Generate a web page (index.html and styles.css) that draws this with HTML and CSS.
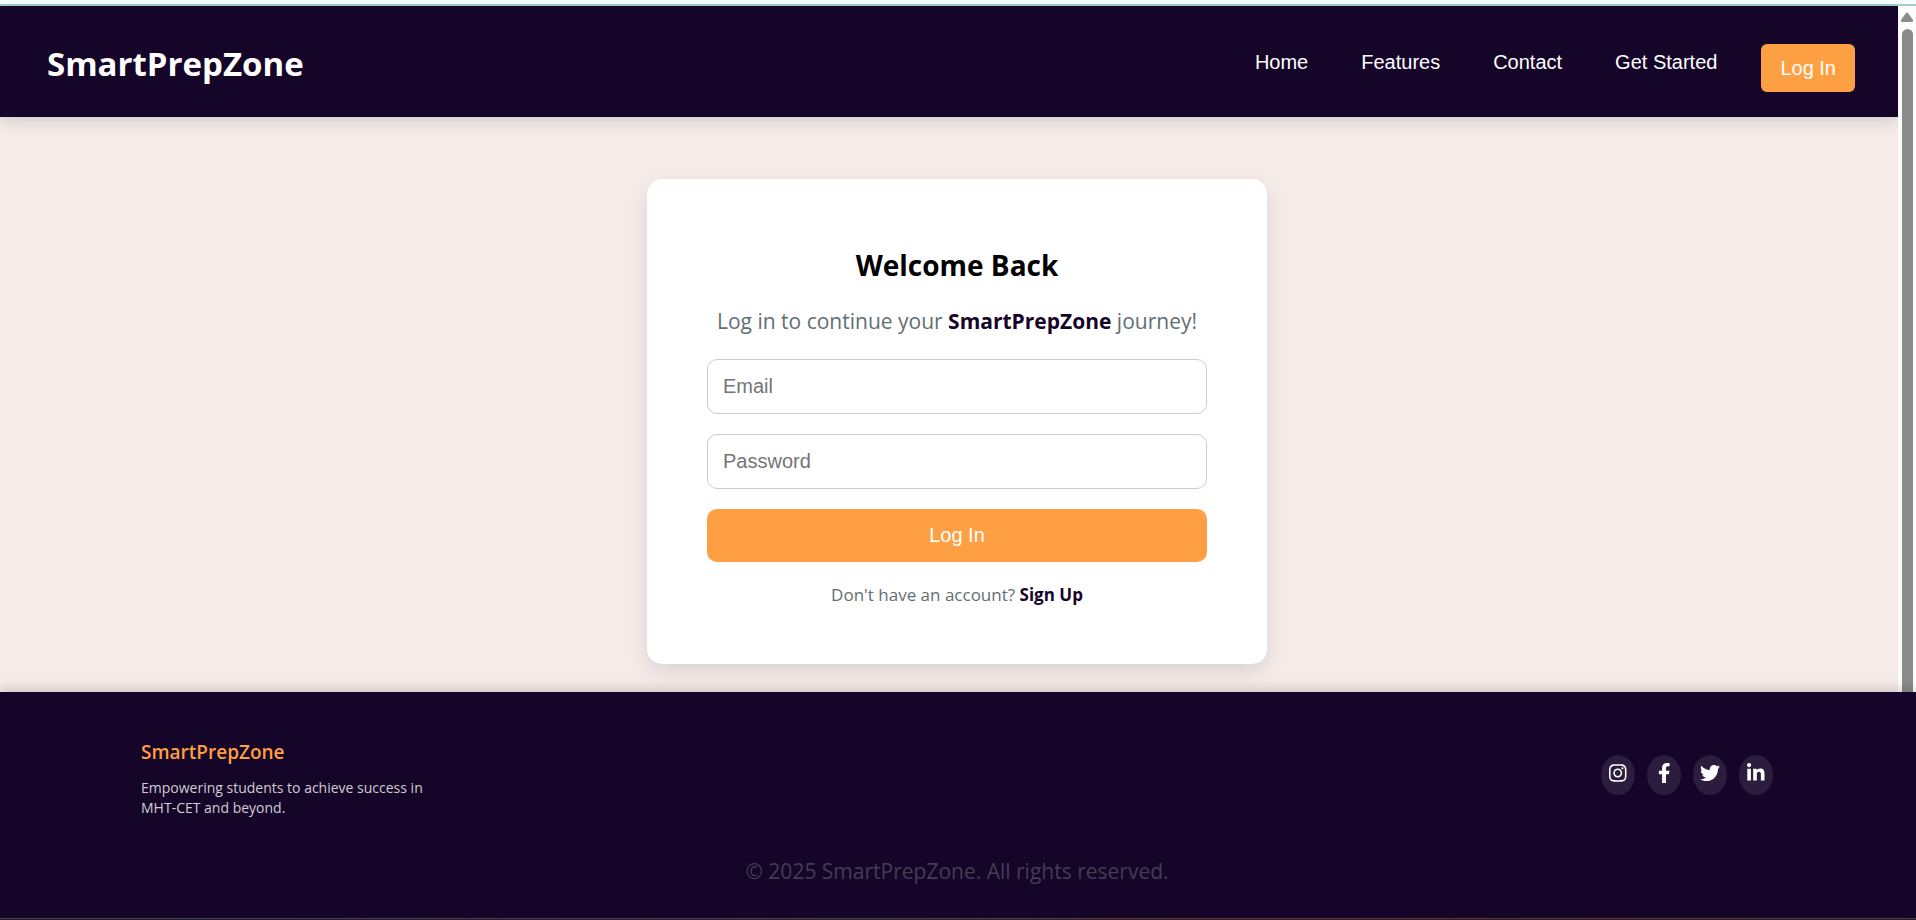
FILE: index.html
```html
<!DOCTYPE html>
<html lang="en">
<head>
<meta charset="utf-8">
<title>SmartPrepZone - Log In</title>
<link rel="stylesheet" href="styles.css">
</head>
<body>
<div class="window-edge"></div>
<div class="viewport">
  <div class="page">
    <header class="navbar">
      <div class="logo">SmartPrepZone</div>
      <nav class="nav">
        <a class="nav-link" href="#home">Home</a>
        <a class="nav-link" href="#features">Features</a>
        <a class="nav-link" href="#contact">Contact</a>
        <a class="nav-link" href="#start">Get Started</a>
        <button class="nav-button" type="button">Log In</button>
      </nav>
    </header>
    <main class="content">
      <form class="card">
        <h1 class="card-title">Welcome Back</h1>
        <p class="card-text">Log in to continue your <strong class="brand">SmartPrepZone</strong> journey!</p>
        <input class="field" type="email" placeholder="Email" aria-label="Email">
        <input class="field" type="password" placeholder="Password" aria-label="Password">
        <button class="submit" type="submit">Log In</button>
        <p class="signup">Don't have an account? <a class="signup-link" href="#signup">Sign Up</a></p>
      </form>
    </main>
  </div>
  <div class="scrollbar">
    <svg class="scroll-arrow" viewBox="0 0 14 10" width="14" height="10"><path d="M6 1Q7 0 8 1L13 8Q13.500 10 12 10H2Q.5 10 1 8Z" fill="#8b8b8b"/></svg>
    <div class="scroll-thumb"></div>
  </div>
</div>
<footer class="footer">
  <div class="footer-main">
    <div class="footer-about">
      <h2 class="footer-brand">SmartPrepZone</h2>
      <p class="footer-text">Empowering students to achieve success in MHT-CET and beyond.</p>
    </div>
    <div class="socials">
      <a class="social" href="#instagram" aria-label="Instagram"><svg viewBox="0 0 448 512" height="20"><path d="M224.100 141c-63.600 0-114.900 51.300-114.900 114.900s51.300 114.900 114.900 114.900S339 319.500 339 255.900 287.700 141 224.100 141zm0 189.600c-41.100 0-74.700-33.500-74.700-74.700s33.500-74.700 74.700-74.700 74.700 33.500 74.700 74.700-33.600 74.700-74.700 74.700zm146.400-194.300c0 14.900-12 26.800-26.800 26.800-14.900 0-26.800-12-26.800-26.800s12-26.800 26.800-26.800 26.800 12 26.800 26.800zm76.100 27.200c-1.700-35.900-9.900-67.700-36.200-93.900-26.200-26.200-58-34.400-93.900-36.200-37-2.100-147.900-2.100-184.900 0-35.800 1.700-67.600 9.900-93.900 36.100s-34.400 58-36.200 93.900c-2.100 37-2.100 147.900 0 184.900 1.700 35.900 9.900 67.700 36.200 93.900s58 34.400 93.900 36.200c37 2.100 147.900 2.100 184.900 0 35.900-1.700 67.700-9.900 93.900-36.200 26.200-26.200 34.400-58 36.200-93.900 2.100-37 2.100-147.800 0-184.800zM398.800 388c-7.800 19.600-22.900 34.700-42.600 42.600-29.500 11.700-99.500 9-132.100 9s-102.700 2.600-132.100-9c-19.600-7.800-34.700-22.900-42.600-42.600-11.700-29.500-9-99.500-9-132.100s-2.600-102.700 9-132.100c7.800-19.600 22.900-34.700 42.600-42.600 29.500-11.700 99.500-9 132.100-9s102.700-2.600 132.100 9c19.600 7.800 34.700 22.900 42.600 42.600 11.700 29.500 9 99.500 9 132.100s2.700 102.700-9 132.100z"/></svg></a>
      <a class="social" href="#facebook" aria-label="Facebook"><svg viewBox="0 0 320 512" height="20"><path d="M279.140 288l14.220-92.660h-88.910v-60.130c0-25.350 12.420-50.060 52.240-50.060h40.420V6.260S260.430 0 225.360 0c-73.220 0-121.080 44.380-121.080 124.720v70.620H22.890V288h81.390v224h100.170V288z"/></svg></a>
      <a class="social" href="#twitter" aria-label="Twitter"><svg viewBox="0 0 512 512" height="20"><path d="M459.370 151.716c.325 4.548.325 9.097.325 13.645 0 138.720-105.583 298.558-298.558 298.558-59.452 0-114.680-17.219-161.137-47.106 8.447.974 16.568 1.299 25.340 1.299 49.055 0 94.213-16.568 130.274-44.832-46.132-.975-84.792-31.188-98.112-72.772 6.498.974 12.995 1.624 19.818 1.624 9.421 0 18.843-1.300 27.614-3.573-48.081-9.747-84.143-51.980-84.143-102.985v-1.299c13.969 7.797 30.214 12.670 47.431 13.319-28.264-18.843-46.781-51.005-46.781-87.391 0-19.492 5.197-37.360 14.294-52.954 51.655 63.675 129.300 105.258 216.365 109.807-1.624-7.797-2.599-15.918-2.599-24.040 0-57.828 46.782-104.934 104.934-104.934 30.213 0 57.502 12.670 76.670 33.137 23.715-4.548 46.456-13.320 66.599-25.340-7.798 24.366-24.366 44.833-46.132 57.827 21.117-2.273 41.584-8.122 60.426-16.243-14.292 20.791-32.161 39.308-52.628 54.253z"/></svg></a>
      <a class="social" href="#linkedin" aria-label="LinkedIn"><svg viewBox="0 0 448 512" height="20"><path d="M100.280 448H7.400V148.900h92.880zM53.790 108.100C24.090 108.100 0 83.500 0 53.800a53.790 53.790 0 0 1 107.580 0c0 29.700-24.100 54.300-53.790 54.300zM447.900 448h-92.680V302.400c0-34.700-.7-79.200-48.290-79.200-48.290 0-55.690 37.700-55.690 76.700V448h-92.780V148.900h89.080v40.800h1.300c12.400-23.500 42.690-48.300 87.880-48.300 94 0 111.280 61.900 111.280 142.300V448z"/></svg></a>
    </div>
  </div>
  <p class="copyright">© 2025 SmartPrepZone. All rights reserved.</p>
</footer>
<div class="bottom-edge"></div>
</body>
</html>
```
FILE: styles.css
```css
* { box-sizing: border-box; margin: 0; }
body {
  min-height: 100vh;
  display: flex;
  flex-direction: column;
  overflow: hidden;
  background: #f5ecea;
  font-family: "Open Sans", "Noto Sans", sans-serif;
}
.window-edge { height: 6px; background: #f5ffff; border-bottom: 2px solid #a6cfd1; }
.viewport { display: flex; flex: 1; }
.page { flex: 1; display: flex; flex-direction: column; }
.navbar {
  display: flex;
  justify-content: space-between;
  align-items: flex-start;
  padding: 33px 43px 25px 47px;
  background: #150528;
  box-shadow: 0 4px 15px rgba(0, 0, 0, 0.15);
}
.logo { color: #fff; font-size: 33px; font-weight: 700; line-height: 49px; }
.nav { display: flex; align-items: center; padding-top: 5px; }
.nav-link, .nav-button, .field, .submit {
  font-family: "Liberation Sans", Arial, sans-serif;
  font-size: 20px;
}
.nav-link { margin-right: 53px; padding-bottom: 12px; color: #fff; text-decoration: none; }
.nav-link:nth-child(4) { margin-right: 44px; }
.nav-button {
  height: 48px;
  padding: 0 19px;
  border: 0;
  border-radius: 6px;
  background: #ff9f43;
  color: #fff;
}
.content { display: flex; justify-content: center; padding: 62px 0 28px 16px; }
.card {
  width: 620px;
  padding: 60px 60px 58px;
  border-radius: 15px;
  background: #fff;
  box-shadow: 0 8px 20px rgba(0, 0, 0, 0.1);
  display: flex;
  flex-direction: column;
  text-align: center;
}
.card-title { font-size: 28px; line-height: 52px; color: #000; }
.card-text { margin: 12px 0 20px; font-size: 21px; line-height: 36px; color: #636e72; }
.brand { color: #150528; }
.field {
  height: 55px;
  margin-bottom: 20px;
  padding: 0 15px;
  border: 1px solid #ccc;
  border-radius: 10px;
  background: #fff;
}
.field::placeholder { color: #757575; }
.submit { height: 53px; border: 0; border-radius: 10px; background: #ff9f43; color: #fff; }
.signup { margin-top: 22px; font-size: 17px; line-height: 22px; color: #636e72; }
.signup-link { color: #150528; font-weight: 700; text-decoration: none; }
.scrollbar {
  width: 18px;
  display: flex;
  flex-direction: column;
  align-items: center;
  gap: 7px;
  padding-top: 6px;
  background: #fcfcfc;
}
.scroll-thumb { flex: 1; width: 11px; border-radius: 6px 6px 0 0; background: #8b8b8b; }
.footer {
  position: relative;
  padding: 44px 143px 29px 141px;
  background: #150528;
  box-shadow: 0 -4px 10px rgba(0, 0, 0, 0.15);
}
.footer-main { display: flex; justify-content: space-between; align-items: center; }
.footer-about { max-width: 300px; }
.footer-brand { color: #ff9f43; font-size: 19px; font-weight: 600; line-height: 32px; }
.footer-text { margin-top: 10px; color: #d0cdd4; font-size: 14px; line-height: 20px; }
.socials { display: flex; gap: 12px; padding-bottom: 4px; }
.social {
  display: flex;
  justify-content: center;
  width: 34px;
  height: 40px;
  padding-top: 8px;
  border-radius: 50%;
  background: #2c1d3e;
  fill: #fff;
}
.copyright { margin-top: 35px; text-align: center; color: #443d52; font-size: 21px; line-height: 36px; }
.bottom-edge {
  height: 3px;
  border-top: 1px solid #4a4350;
  background: linear-gradient(90deg, #241a30, #1e1c30 10%, #3a1838 33%, #33262a 45%, #4a1518 65%, #35191b);
}
```
